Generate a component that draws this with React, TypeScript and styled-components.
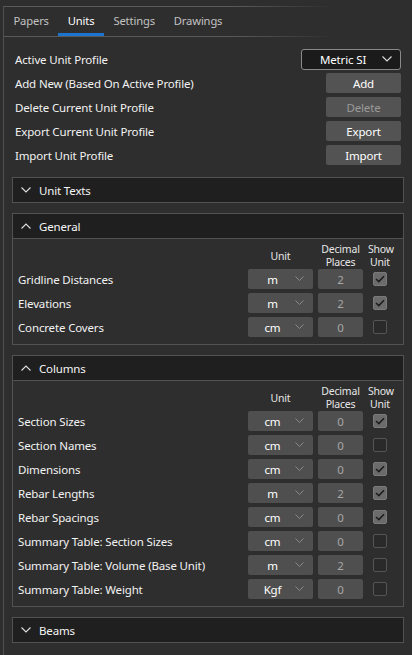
import React from "react";
import styled, { createGlobalStyle } from "styled-components";

const GlobalStyle = createGlobalStyle`
  html, body {
    margin: 0;
    padding: 0;
    background: #2e2e2e;
    font-family: "Noto Sans", "Open Sans", sans-serif;
    font-size: 11.5px;
    letter-spacing: -0.15px;
    color: #f2f2f2;
  }
`;

const Page = styled.div`
  padding: 6px 0 0 3px;
  min-height: 649px;
`;

const Panel = styled.div`
  border-left: 1px solid #505050;
  min-height: 649px;
`;

const FadeLine = styled.div`
  height: 1px;
  background: linear-gradient(to right, #5a5a5a 0, #5a5a5a 230px, rgba(90, 90, 90, 0) 330px);
`;

const TabStrip = styled.div`
  display: flex;
  height: 29px;
`;

const Tab = styled.div<{ $active?: boolean }>`
  display: flex;
  align-items: center;
  padding: 0 9.5px 2px;
  font-size: 11.2px;
  color: ${(p) => (p.$active ? "#ffffff" : "#c2c2c2")};
  box-shadow: ${(p) => (p.$active ? "inset 0 -3px 0 #1b74cf" : "none")};
`;

const Content = styled.div`
  padding: 12px 8px 0 8px;
`;

const ProfileRows = styled.div`
  display: flex;
  flex-direction: column;
  gap: 4px;
  padding: 0 3px;
`;

const ProfileRow = styled.div`
  display: flex;
  align-items: center;
  justify-content: space-between;
  height: 20px;
`;

const Label = styled.span`
  color: #f2f2f2;
  white-space: nowrap;
`;

const ActionButton = styled.button<{ $disabled?: boolean }>`
  width: 75px;
  height: 20px;
  border: none;
  border-radius: 2px;
  background: #535353;
  color: ${(p) => (p.$disabled ? "#9a9a9a" : "#ffffff")};
  font-family: inherit;
  font-size: 11.5px;
  letter-spacing: -0.15px;
  padding: 0;
`;

const ProfileSelect = styled.div`
  display: flex;
  align-items: center;
  justify-content: space-between;
  box-sizing: border-box;
  width: 100px;
  height: 21px;
  border: 1px solid #8a8a8a;
  border-radius: 3px;
  background: #1b1b1b;
  padding: 0 8px 0 18px;
  color: #ffffff;
`;

const Sections = styled.div`
  display: flex;
  flex-direction: column;
  gap: 10px;
  margin-top: 12px;
`;

const Expander = styled.div`
  border: 1px solid #525252;
`;

const ExpanderHeader = styled.div<{ $open?: boolean }>`
  display: flex;
  align-items: center;
  gap: 8px;
  height: 24px;
  padding-left: 8px;
  background: #1f1f1f;
  font-size: 11.5px;
  color: #f5f5f5;
  border-bottom: ${(p) => (p.$open ? "1px solid #525252" : "none")};
`;

const ExpanderBody = styled.div`
  padding: 1px 11px 7px 5px;
`;

const Grid = styled.div`
  display: grid;
  grid-template-columns: 1fr 65px 45px 24px;
  column-gap: 5px;
  row-gap: 4px;
  align-items: center;
`;

const ColumnHead = styled.div`
  font-size: 10.5px;
  line-height: 13px;
  color: #e6e6e6;
  text-align: center;
  white-space: nowrap;
  letter-spacing: -0.2px;
  padding-top: 3px;
  margin-bottom: -4px;
`;

const UnitSelect = styled.div`
  position: relative;
  height: 20px;
  border-radius: 2px;
  background: #4f4f4f;
  display: flex;
  align-items: center;
  justify-content: center;
  padding-right: 16px;
  color: #ffffff;
`;

const ChevronSlot = styled.span`
  position: absolute;
  right: 9px;
  top: 7px;
  display: flex;
`;

const DecimalBox = styled.div`
  height: 20px;
  border-radius: 2px;
  background: #4f4f4f;
  color: #a6a6a6;
  display: flex;
  align-items: center;
  justify-content: center;
`;

const CheckCell = styled.div`
  display: flex;
  justify-content: center;
`;

const CheckBox = styled.div<{ $checked?: boolean }>`
  box-sizing: border-box;
  width: 14px;
  height: 14px;
  border-radius: 2px;
  border: 1px solid ${(p) => (p.$checked ? "#7a7a7a" : "#555555")};
  background: ${(p) => (p.$checked ? "#6b6b6b" : "#2a2a2a")};
  display: flex;
  align-items: center;
  justify-content: center;
`;

const Chevron: React.FC<{ up?: boolean; color?: string; size?: number }> = ({
  up,
  color = "#e0e0e0",
  size = 10,
}) => (
  <svg width={size} height={size * 0.6} viewBox="0 0 10 6" fill="none">
    <polyline
      points={up ? "0.5,5.5 5,1 9.5,5.5" : "0.5,0.5 5,5 9.5,0.5"}
      stroke={color}
      strokeWidth="1.1"
    />
  </svg>
);

const Check = () => (
  <svg width="10" height="8" viewBox="0 0 10 8" fill="none">
    <polyline points="1,4 3.8,6.6 9,1.2" stroke="#1c1c1c" strokeWidth="1.5" />
  </svg>
);

interface UnitRow {
  name: string;
  unit: string;
  decimals: number;
  show: boolean;
}

const general: UnitRow[] = [
  { name: "Gridline Distances", unit: "m", decimals: 2, show: true },
  { name: "Elevations", unit: "m", decimals: 2, show: true },
  { name: "Concrete Covers", unit: "cm", decimals: 0, show: false },
];

const columns: UnitRow[] = [
  { name: "Section Sizes", unit: "cm", decimals: 0, show: true },
  { name: "Section Names", unit: "cm", decimals: 0, show: false },
  { name: "Dimensions", unit: "cm", decimals: 0, show: true },
  { name: "Rebar Lengths", unit: "m", decimals: 2, show: true },
  { name: "Rebar Spacings", unit: "cm", decimals: 0, show: true },
  { name: "Summary Table: Section Sizes", unit: "cm", decimals: 0, show: false },
  { name: "Summary Table: Volume (Base Unit)", unit: "m", decimals: 2, show: false },
  { name: "Summary Table: Weight", unit: "Kgf", decimals: 0, show: false },
];

const UnitTable: React.FC<{ rows: UnitRow[] }> = ({ rows }) => (
  <Grid>
    <div />
    <ColumnHead>Unit</ColumnHead>
    <ColumnHead>
      Decimal
      <br />
      Places
    </ColumnHead>
    <ColumnHead>
      Show
      <br />
      Unit
    </ColumnHead>
    {rows.map((r) => (
      <React.Fragment key={r.name}>
        <Label>{r.name}</Label>
        <UnitSelect>
          {r.unit}
          <ChevronSlot>
            <Chevron color="#8c8c8c" size={9} />
          </ChevronSlot>
        </UnitSelect>
        <DecimalBox>{r.decimals}</DecimalBox>
        <CheckCell>
          <CheckBox $checked={r.show}>{r.show && <Check />}</CheckBox>
        </CheckCell>
      </React.Fragment>
    ))}
  </Grid>
);

const Section: React.FC<{ title: string; open?: boolean; children?: React.ReactNode }> = ({
  title,
  open,
  children,
}) => (
  <Expander>
    <ExpanderHeader $open={open}>
      <Chevron up={open} />
      {title}
    </ExpanderHeader>
    {open && <ExpanderBody>{children}</ExpanderBody>}
  </Expander>
);

const App: React.FC = () => {
  return (
    <Page>
      <GlobalStyle />
      <Panel>
        <FadeLine />
        <TabStrip>
          <Tab>Papers</Tab>
          <Tab $active>Units</Tab>
          <Tab>Settings</Tab>
          <Tab>Drawings</Tab>
        </TabStrip>
        <FadeLine />
        <Content>
          <ProfileRows>
            <ProfileRow>
              <Label>Active Unit Profile</Label>
              <ProfileSelect>
                Metric SI
                <Chevron />
              </ProfileSelect>
            </ProfileRow>
            <ProfileRow>
              <Label>Add New (Based On Active Profile)</Label>
              <ActionButton>Add</ActionButton>
            </ProfileRow>
            <ProfileRow>
              <Label>Delete Current Unit Profile</Label>
              <ActionButton $disabled>Delete</ActionButton>
            </ProfileRow>
            <ProfileRow>
              <Label>Export Current Unit Profile</Label>
              <ActionButton>Export</ActionButton>
            </ProfileRow>
            <ProfileRow>
              <Label>Import Unit Profile</Label>
              <ActionButton>Import</ActionButton>
            </ProfileRow>
          </ProfileRows>
          <Sections>
            <Section title="Unit Texts" />
            <Section title="General" open>
              <UnitTable rows={general} />
            </Section>
            <Section title="Columns" open>
              <UnitTable rows={columns} />
            </Section>
            <Section title="Beams" />
          </Sections>
        </Content>
      </Panel>
    </Page>
  );
};

export default App;
